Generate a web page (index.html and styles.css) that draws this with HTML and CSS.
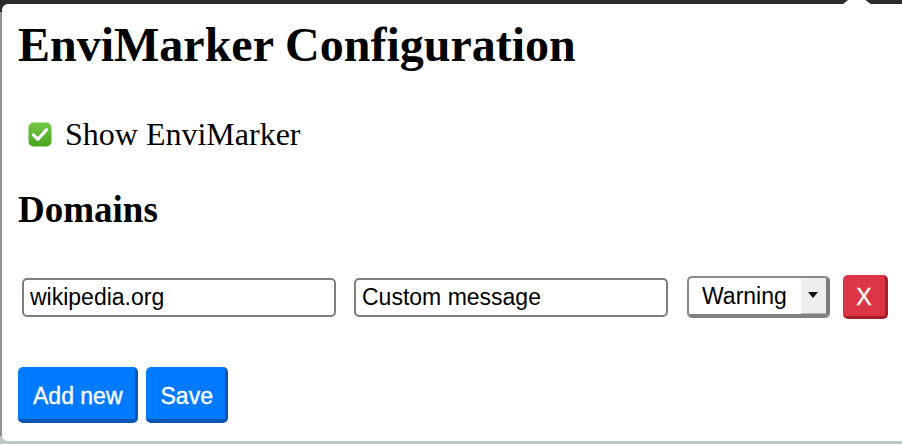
FILE: index.html
```html
<!DOCTYPE html>
<html lang="en">
<head>
<meta charset="utf-8">
<title>EnviMarker Configuration</title>
<link rel="stylesheet" href="styles.css">
</head>
<body>
<div class="notch"></div>
<main class="popup">
  <h1 class="title">EnviMarker Configuration</h1>
  <label class="toggle">
    <svg class="check" width="24" height="25" viewBox="0 0 24 25" aria-hidden="true">
      <defs>
        <linearGradient id="g" x1="0" y1="0" x2="0" y2="1">
          <stop offset="0" stop-color="#74c94a"/>
          <stop offset="1" stop-color="#48a51f"/>
        </linearGradient>
      </defs>
      <rect x="0.5" y="0.5" width="23" height="24" rx="5" fill="url(#g)"/>
      <path d="M5.5 12.8 L10 17.3 L18.5 7.6" fill="none" stroke="#fff" stroke-width="3.2" stroke-linecap="round" stroke-linejoin="round"/>
    </svg>
    <span class="toggle-text">Show EnviMarker</span>
  </label>
  <h2 class="section">Domains</h2>
  <div class="domain-row">
    <input class="field" type="text" value="wikipedia.org">
    <input class="field" type="text" value="Custom message">
    <div class="select"><span class="select-value">Warning</span><span class="select-arrow"></span></div>
    <button class="btn btn-danger">X</button>
  </div>
  <div class="actions">
    <button class="btn btn-primary">Add new</button>
    <button class="btn btn-primary">Save</button>
  </div>
</main>
</body>
</html>
```

FILE: styles.css
```css
html, body {
  margin: 0;
  padding: 0;
}

body {
  width: 902px;
  height: 444px;
  overflow: hidden;
  position: relative;
  background: linear-gradient(to bottom, #2c2c2c 0, #2c2c2c 12px, #8f8f8f 12px, #8f8f8f 436px, #bccac2 436px);
  font-family: "Liberation Serif", "Times New Roman", serif;
  color: #000;
}

.notch {
  position: absolute;
  top: 0;
  left: 842px;
  width: 30px;
  height: 5px;
  background: #fff;
  clip-path: polygon(20% 0, 78% 0, 100% 100%, 0 100%);
}

.popup {
  box-sizing: border-box;
  margin: 4px 0 0 2px;
  height: 437px;
  background: #fff;
  border-radius: 6px 0 0 6px;
  padding: 13px 0 0 16px;
}

.title {
  margin: 0;
  font-size: 48px;
  line-height: 56px;
  font-weight: 700;
}

.toggle {
  display: flex;
  align-items: center;
  margin-top: 41px;
  height: 40px;
  font-size: 32px;
  line-height: 40px;
}

.check {
  margin-left: 10px;
  margin-right: 13px;
  flex: none;
}

.section {
  margin: 35px 0 0;
  font-size: 37px;
  line-height: 42px;
  font-weight: 700;
}

.domain-row {
  display: flex;
  align-items: center;
  margin-top: 44px;
  padding-left: 4px;
  height: 44px;
}

.domain-row > * {
  flex: none;
}

.field {
  box-sizing: border-box;
  width: 314px;
  height: 39px;
  margin: 0 18px 0 0;
  padding: 0 6px;
  border: 2px solid #7e7e7e;
  border-radius: 5px;
  font-family: "Liberation Sans", Arial, sans-serif;
  font-size: 23px;
  color: #000;
  background: #fff;
  outline: none;
}

.select {
  box-sizing: border-box;
  display: flex;
  align-items: stretch;
  width: 143px;
  height: 42px;
  margin-left: 1px;
  border: 2px solid #8a8a8a;
  border-right-width: 4px;
  border-bottom-width: 4px;
  border-right-color: #7c7c7c;
  border-bottom-color: #808080;
  border-radius: 5px;
  font-family: "Liberation Sans", Arial, sans-serif;
  font-size: 23px;
  background: #fff;
  overflow: hidden;
}

.select-value {
  display: flex;
  align-items: center;
  padding-left: 13px;
  flex: 1;
}

.select-arrow {
  position: relative;
  width: 25px;
  background: #efefef;
  border-bottom: 1px solid #b5b5b5;
}

.select-arrow::after {
  content: "";
  position: absolute;
  left: 7px;
  top: 14px;
  border-left: 5.5px solid transparent;
  border-right: 5.5px solid transparent;
  border-top: 6px solid #111;
}

.btn {
  box-sizing: border-box;
  border: 0;
  border-radius: 5px;
  color: #fff;
  font-family: "Liberation Sans", Arial, sans-serif;
  font-size: 23px;
  -webkit-text-stroke: 0.35px #fff;
  cursor: pointer;
}

.btn-danger {
  width: 45px;
  height: 44px;
  margin-left: 13px;
  padding: 3px 0 0;
  background: #dc3545;
  border-right: 3px solid #a51f2c;
  border-bottom: 3px solid #a51f2c;
  font-size: 23px;
}

.actions {
  display: flex;
  gap: 8px;
  margin-top: 48px;
}

.btn-primary {
  height: 56px;
  padding: 6px 12px 0 15px;
  background: #007bff;
  border-right: 3px solid #0a57b3;
  border-bottom: 4px solid #0a57b3;
}
```
